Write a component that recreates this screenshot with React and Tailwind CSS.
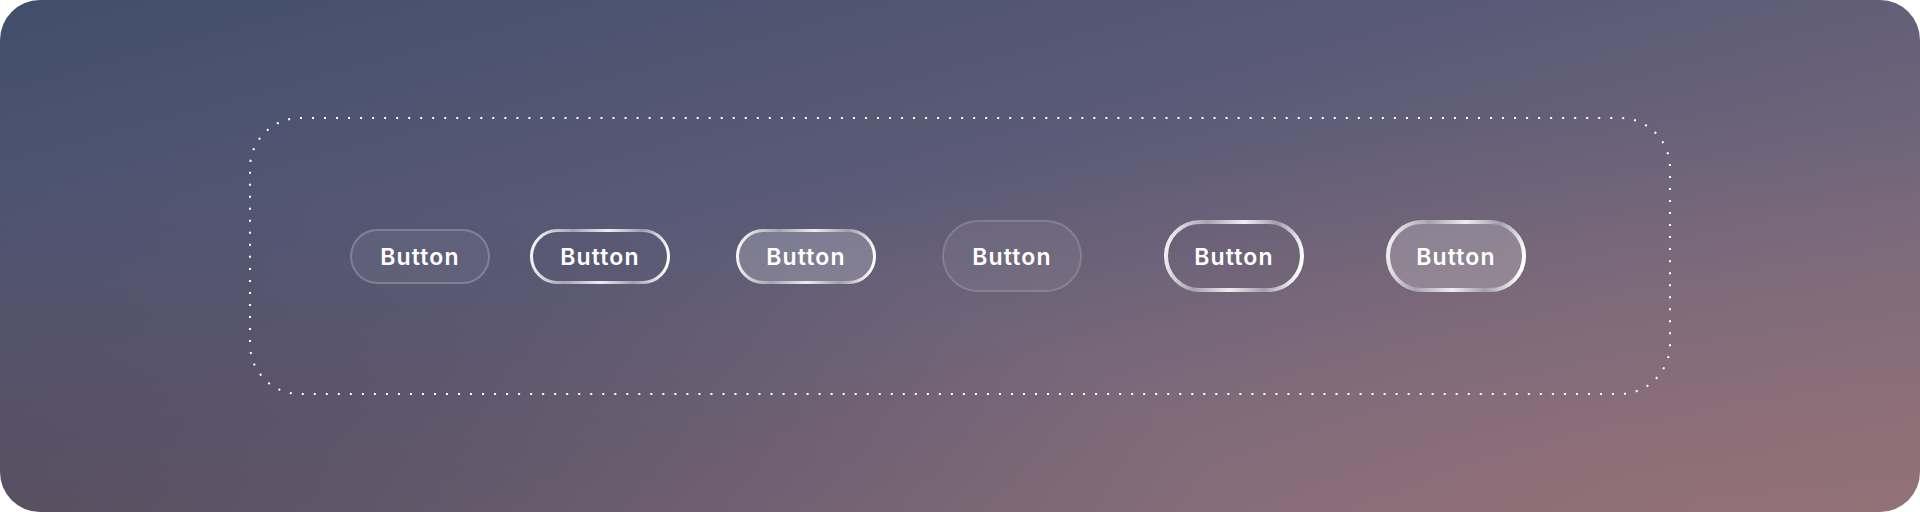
function MetalRing({ w, h, sw, id }) {
  return (
    <svg className="absolute inset-0 pointer-events-none" width={w} height={h}>
      <defs>
        <linearGradient id={id} x1="0" y1="0" x2={w} y2={h * 0.4} gradientUnits="userSpaceOnUse">
          <stop offset="0" stopColor="#ffffff" />
          <stop offset="0.3" stopColor="#a7a2b0" />
          <stop offset="0.55" stopColor="#efedf2" />
          <stop offset="0.78" stopColor="#a19cab" />
          <stop offset="1" stopColor="#ffffff" />
        </linearGradient>
      </defs>
      <rect
        x={sw / 2}
        y={sw / 2}
        width={w - sw}
        height={h - sw}
        rx={(h - sw) / 2}
        fill="none"
        stroke={`url(#${id})`}
        strokeWidth={sw}
      />
    </svg>
  );
}

function GlassButton({ id, size = "sm", ring = "soft", fill = "none", className = "" }) {
  const h = size === "lg" ? 72 : 55;
  const hc = size === "lg" ? "h-[72px]" : "h-[55px]";
  const bg =
    fill === "strong" ? "bg-white/20" : fill === "soft" ? "bg-white/[0.06]" : "bg-transparent";

  return (
    <button
      className={`relative w-[140px] ${hc} ${bg} rounded-full flex items-center justify-center shrink-0 ${
        ring === "soft" ? "border-2 border-white/20" : ""
      } ${className}`}
    >
      {ring === "metal" && <MetalRing w={140} h={h} sw={size === "lg" ? 4 : 3} id={id} />}
      <span className="relative pt-[3px] text-white text-[23px] font-semibold tracking-[0.05em] font-['Inter',sans-serif]">
        Button
      </span>
    </button>
  );
}

export default function App() {
  return (
    <div className="bg-white w-[1920px] h-[512px]">
      <div className="w-full h-full rounded-[40px] overflow-hidden relative bg-[radial-gradient(ellipse_at_0%_100%,rgba(80,66,78,0.55),transparent_45%),radial-gradient(ellipse_at_90%_100%,rgba(160,112,116,0.45),transparent_55%),linear-gradient(165deg,#414e6b_0%,#5a5a76_40%,#786a7c_75%,#8a7279_100%)] flex items-center justify-center">
        <div className="relative w-[1422px] h-[278px] flex items-center pl-[101px]">
          <svg className="absolute inset-0 pointer-events-none" width="1422" height="278">
            <path
              d="M51 1 H1371 A50 50 0 0 1 1421 51 V227 A50 50 0 0 1 1371 277 H51 A50 50 0 0 1 1 227 V51 A50 50 0 0 1 51 1 Z"
              pathLength="3300"
              fill="none"
              stroke="white"
              strokeWidth="2"
              strokeDasharray="2 10"
            />
          </svg>
          <GlassButton ring="soft" fill="soft" />
          <GlassButton id="m2" ring="metal" className="ml-[40px]" />
          <GlassButton id="m3" ring="metal" fill="strong" className="ml-[66px]" />
          <GlassButton size="lg" ring="soft" fill="soft" className="ml-[66px] !border-white/15" />
          <GlassButton id="m5" size="lg" ring="metal" className="ml-[82px]" />
          <GlassButton id="m6" size="lg" ring="metal" fill="strong" className="ml-[82px]" />
        </div>
      </div>
    </div>
  );
}
